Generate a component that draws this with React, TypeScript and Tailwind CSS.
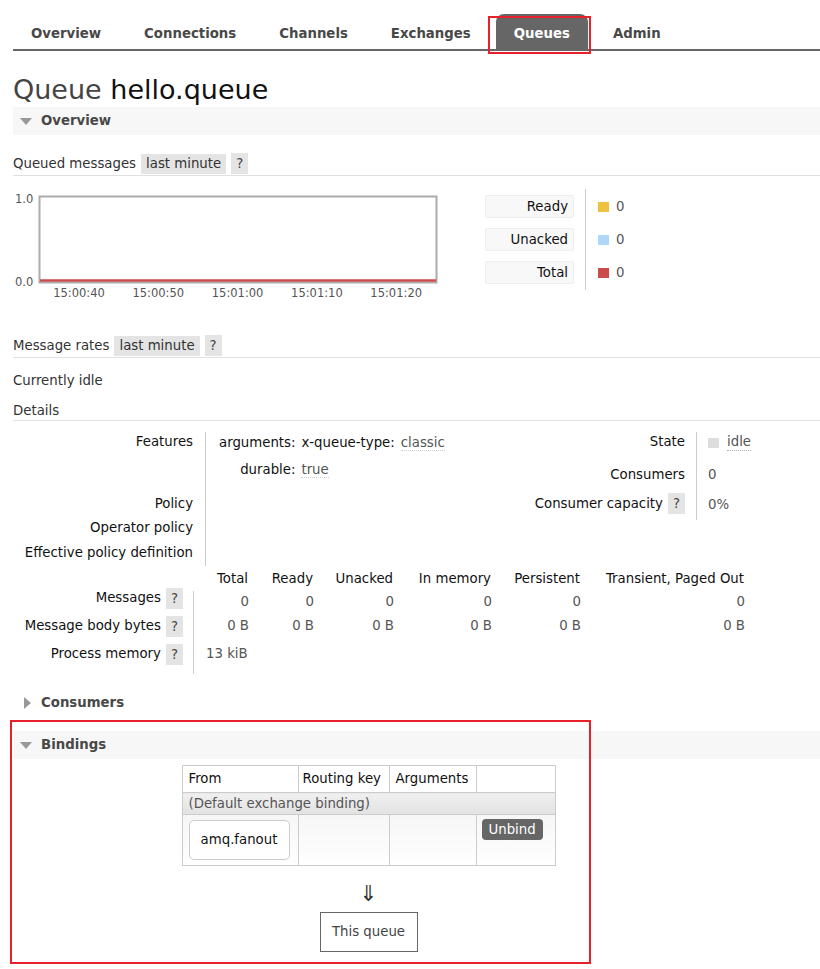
import React from "react";

const tabs = ["Overview", "Connections", "Channels", "Exchanges", "Queues", "Admin"];

function Help() {
  return <span className="ml-[5px] inline-block bg-[#e4e4e4] px-[5px] leading-[21px] text-[#444]">?</span>;
}

function SectionHead({ title, open = true, shaded = true }: { title: string; open?: boolean; shaded?: boolean }) {
  return (
    <div className={`flex h-[28px] items-center gap-[9px] pl-[7px] ${shaded ? "bg-[#f7f7f7]" : ""}`}>
      {open ? (
        <span className="h-0 w-0 border-x-[6px] border-t-[7px] border-x-transparent border-t-[#999]" />
      ) : (
        <span className="ml-[4px] mr-[1px] h-0 w-0 border-y-[6px] border-l-[7px] border-y-transparent border-l-[#999]" />
      )}
      <span className="font-bold text-[#484848]">{title}</span>
    </div>
  );
}

function SubHead({ label }: { label: string }) {
  return (
    <div className="flex items-end border-b border-[#e0e0e0] pb-[1px]">
      <span className="mr-[5px] text-[#333]">{label}</span>
      <span className="bg-[#e4e4e4] px-[5px] leading-[20px] text-[#333]">last minute</span>
      <Help />
    </div>
  );
}

function Chart() {
  const ticks = ["15:00:40", "15:00:50", "15:01:00", "15:01:10", "15:01:20"];
  return (
    <svg width="428" height="112" className="block shrink-0">
      <text x="2" y="12" fontSize="11.5" fill="#545454" fontFamily="DejaVu Sans">1.0</text>
      <text x="2" y="95" fontSize="11.5" fill="#545454" fontFamily="DejaVu Sans">0.0</text>
      <rect x="26.5" y="5.5" width="397" height="86" fill="#fff" stroke="#acacac" strokeWidth="2" />
      <line x1="27" y1="89.5" x2="423" y2="89.5" stroke="#cb4b4b" strokeWidth="2.5" />
      {ticks.map((t, i) => (
        <text key={t} x={66 + i * 79.3} y="106" textAnchor="middle" fontSize="11.5" fill="#545454" fontFamily="DejaVu Sans">
          {t}
        </text>
      ))}
    </svg>
  );
}

const legend = [
  { name: "Ready", color: "bg-[#edc240]" },
  { name: "Unacked", color: "bg-[#afd8f8]" },
  { name: "Total", color: "bg-[#cb4b4b]" },
];

function Legend() {
  return (
    <div className="ml-[44px] mt-[-2px] flex self-start">
      <div className="flex w-[101px] flex-col gap-[10px] border-r border-[#ccc] py-[6px] pr-[11px]">
        {legend.map((l) => (
          <div key={l.name} className="h-[23px] rounded-[2px] border border-[#eee] bg-[#f8f8f8] pr-[5px] text-right leading-[21px] text-[#111]">
            {l.name}
          </div>
        ))}
      </div>
      <div className="flex flex-col gap-[10px] py-[6px] pl-[12px]">
        {legend.map((l) => (
          <div key={l.name} className="flex h-[23px] items-center gap-[7px] text-[#555]">
            <span className={`h-[10px] w-[11px] ${l.color}`} />
            <span>0</span>
          </div>
        ))}
      </div>
    </div>
  );
}

const cols = ["Total", "Ready", "Unacked", "In memory", "Persistent", "Transient, Paged Out"];
const colW = ["w-[55px]", "w-[65px]", "w-[80px]", "w-[98px]", "w-[89px]", "w-[164px]"];

export default function App() {
  return (
    <div className="relative min-h-[969px] bg-white pl-[13px] text-[13.3px] leading-[20px] text-[#222]" style={{ fontFamily: '"DejaVu Sans", Verdana, sans-serif' }}>
      {/* nav */}
      <div className="flex h-[51px] items-end border-b-2 border-[#666]">
        {tabs.map((t) => (
          <div
            key={t}
            className={`mr-[7px] flex h-[35px] items-center rounded-t-[8px] px-[18px] pt-[4px] font-bold ${
              t === "Queues" ? "bg-[#666] text-white" : "text-[#484848]"
            }`}
          >
            {t}
          </div>
        ))}
      </div>

      <h1 className="mt-[22px] text-[27px] leading-[34px] text-[#444]">
        Queue <span className="text-[#111]">hello.queue</span>
      </h1>

      <SectionHead title="Overview" />

      <div className="mt-[18px]">
        <SubHead label="Queued messages" />
      </div>

      <div className="mt-[15px] flex">
        <Chart />
        <Legend />
      </div>

      <div className="mt-[32px]">
        <SubHead label="Message rates" />
      </div>
      <div className="mt-[13px] text-[#333]">Currently idle</div>
      <div className="mt-[10px] border-b border-[#e0e0e0] leading-[19px] text-[#333]">Details</div>

      {/* details */}
      <div className="mt-[11px] flex">
        <div className="flex">
          <div className="flex w-[192px] flex-col items-end pr-[12px] text-right text-[#111]">
            <div className="h-[60px]">Features</div>
            <div className="leading-[24px]">Policy</div>
            <div className="leading-[24px]">Operator policy</div>
            <div className="leading-[26px]">Effective policy definition</div>
          </div>
          <div className="w-[300px] border-l border-[#ccc] pl-[13px]">
            <div className="-mt-[2px] grid grid-cols-[auto_auto_1fr] gap-x-[6px] gap-y-[1px] leading-[26px]">
              <span className="text-right text-[#111]">arguments:</span>
              <span className="text-[#111]">x-queue-type:</span>
              <span className="text-[#555]"><span className="border-b border-dotted border-[#ccc]">classic</span></span>
              <span className="text-right text-[#111]">durable:</span>
              <span className="col-span-2 text-[#555]"><span className="border-b border-dotted border-[#ccc]">true</span></span>
            </div>
          </div>
        </div>
        <div className="ml-[8px] flex h-[88px]">
          <div className="flex w-[183px] flex-col items-end pr-[11px] text-[#111]">
            <div>State</div>
            <div className="mt-[13px]">Consumers</div>
            <div className="mt-[8px] flex items-center">
              Consumer capacity <Help />
            </div>
          </div>
          <div className="border-l border-[#ccc] pl-[11px] text-[#555]">
            <div className="mt-[2px] flex items-center gap-[8px]">
              <span className="h-[10px] w-[11px] bg-[#ddd]" />
              <span className="border-b border-dotted border-[#aaa] leading-[16px]">idle</span>
            </div>
            <div className="mt-[14px]">0</div>
            <div className="mt-[10px]">0%</div>
          </div>
        </div>
      </div>

      {/* message counts */}
      <div className="mt-[3px]">
        <div className="flex pl-[180px] text-[#111]">
          {cols.map((c, i) => (
            <div key={c} className={`${colW[i]} text-right`}>{c}</div>
          ))}
        </div>
        <div className="-mt-[5px] flex">
          <div className="flex w-[180px] flex-col items-end pr-[10px] text-[#111]">
            <div className="flex h-[28px] items-center">Messages <Help /></div>
            <div className="flex h-[28px] items-center">Message body bytes <Help /></div>
            <div className="flex h-[28px] items-center">Process memory <Help /></div>
          </div>
          <div className="text-[#555]">
            <div className="mt-[7px] flex h-[21px] items-center border-l border-[#ccc]">
              {cols.map((c, i) => (
                <div key={c} className={`${colW[i]} text-right`}>0</div>
              ))}
            </div>
            <div className="flex h-[28px] items-center border-l border-[#ccc]">
              {cols.map((c, i) => (
                <div key={c} className={`${colW[i]} text-right`}>0 B</div>
              ))}
            </div>
            <div className="flex h-[34px] items-start border-l border-[#ccc] pl-[12px] pt-[4px]">13 kiB</div>
          </div>
        </div>
      </div>

      <div className="mt-[15px]">
        <SectionHead title="Consumers" open={false} shaded={false} />
      </div>

      <div className="mt-[14px]">
        <SectionHead title="Bindings" />
      </div>

      {/* bindings */}
      <div className="mt-[6px] flex flex-col items-center pr-[96px]">
        <table className="border-collapse border border-[#ccc] text-[#111]">
          <thead>
            <tr className="h-[27px]">
              <th className="w-[116px] border border-[#ccc] pl-[6px] text-left font-normal">From</th>
              <th className="w-[91px] border border-[#ccc] px-[4px] text-left font-normal">Routing key</th>
              <th className="w-[87px] border border-[#ccc] px-[6px] text-left font-normal">Arguments</th>
              <th className="w-[79px] border border-[#ccc]"></th>
            </tr>
          </thead>
          <tbody>
            <tr className="h-[22px]">
              <td colSpan={4} className="border border-[#ccc] bg-gradient-to-b from-[#f0f0f0] to-[#e2e2e2] pl-[6px] text-[#555]">
                (Default exchange binding)
              </td>
            </tr>
            <tr className="h-[51px] bg-gradient-to-b from-[#f6f6f6] to-white">
              <td className="border border-[#ccc] px-[6px]">
                <div className="flex h-[40px] w-[101px] items-center justify-center rounded-[5px] border border-[#ccc] bg-white">amq.fanout</div>
              </td>
              <td className="border border-[#ccc]"></td>
              <td className="border border-[#ccc]"></td>
              <td className="border border-[#ccc] px-[5px] align-top">
                <div className="mt-[4px] inline-block rounded-[4px] bg-[#666] px-[7px] leading-[21px] text-white">Unbind</div>
              </td>
            </tr>
          </tbody>
        </table>
        <div className="mt-[16px] text-[22px] leading-[24px] text-[#333]">⇓</div>
        <div className="mt-[6px] flex h-[40px] w-[98px] items-center justify-center border border-[#666] text-[#444]">This queue</div>
      </div>

      {/* annotation boxes */}
      <div className="pointer-events-none absolute left-[488px] top-[16px] h-[38px] w-[103px] border-2 border-[#e8202a]" />
      <div className="pointer-events-none absolute left-[10px] top-[720px] h-[244px] w-[581px] border-2 border-[#e8202a]" />
    </div>
  );
}
